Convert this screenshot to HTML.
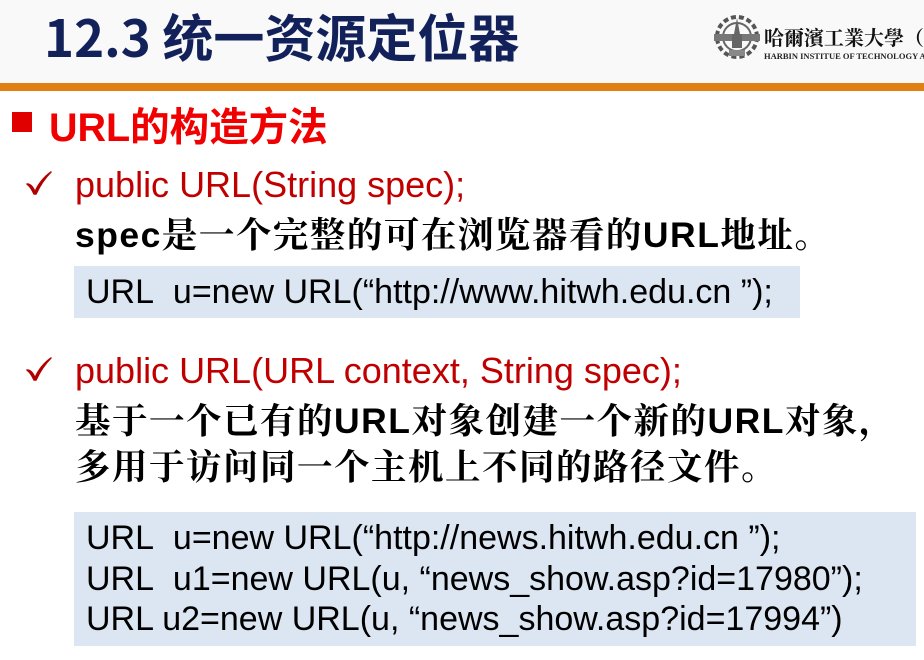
<!DOCTYPE html>
<html><head><meta charset="utf-8"><style>
body{margin:0;width:924px;height:660px;background:#fff;position:relative;overflow:hidden;font-family:"Liberation Sans","Noto Sans CJK SC",sans-serif}
.a{position:absolute;white-space:nowrap}
#hdr{left:0;top:0;width:924px;height:83px;background:#f9f9f9}
#bar{left:0;top:83px;width:924px;height:8px;background:#e08012}
#t{left:44px;top:-2px;font-size:51px;font-weight:bold;color:#12215a;font-family:"Noto Sans CJK SC",sans-serif}
.red{color:#c00000;font-size:36px}
.cj{font-family:"Liberation Sans","Noto Serif CJK SC",serif;font-weight:bold;font-size:35.5px;color:#000;letter-spacing:1.5px}
.box{background:#dce6f2}
.code{font-size:34px;color:#000}
</style></head><body>
<div class="a" id="hdr"></div>
<div class="a" id="bar"></div>
<div class="a" id="t">12.3 统一资源定位器</div>
<svg class="a" style="left:712px;top:12px" width="50" height="50" viewBox="0 0 50 50">
<circle cx="25" cy="25" r="20" fill="none" stroke="#555" stroke-width="4" stroke-dasharray="5 3"/>
<circle cx="25" cy="25" r="14" fill="none" stroke="#666" stroke-width="2"/>
<rect x="2" y="22" width="46" height="7" fill="#777"/>
<path d="M25 6 L28 22 L22 22Z M20 22h10v14H20z" fill="#666"/>
<rect x="17" y="38" width="16" height="6" fill="#888"/>
</svg>
<div class="a" style="left:764px;top:0;width:160px;height:83px;overflow:hidden">
<div class="a" style="left:0;top:22px;font-size:20px;font-weight:bold;color:#111;font-family:'Noto Serif CJK SC',serif">哈爾濱工業大學（</div>
<div class="a" style="left:0;top:51px;font-size:8.5px;color:#222;font-family:'Liberation Serif',serif;font-weight:bold">HARBIN INSTITUE OF TECHNOLOGY AT</div>
</div>
<div class="a" style="left:12px;top:112px;width:20px;height:20px;background:#e00000"></div>
<div class="a" style="left:49px;top:96px;font-size:39.5px;font-weight:bold;color:#f00000">URL的构造方法</div>
<svg class="a" style="left:26px;top:171px" width="26" height="26" viewBox="0 0 26 26"><path d="M1 13 Q6 13 9 21 Q14 9 25 1 Q16 10 10 23 L8 23 Q5 16 1 13Z" fill="#b00000" stroke="#b00000" stroke-width="1.5" stroke-linejoin="round"/></svg>
<div class="a red" style="left:75px;top:164px">public URL(String spec);</div>
<div class="a cj" style="left:75px;top:207px">spec是一个完整的可在浏览器看的URL地址。</div>
<div class="a box" style="left:74px;top:266px;width:726px;height:52px"></div>
<div class="a code" style="left:86px;top:273px">URL&nbsp; u=new URL(“http://www.hitwh.edu.cn ”);</div>
<svg class="a" style="left:26px;top:357px" width="26" height="26" viewBox="0 0 26 26"><path d="M1 13 Q6 13 9 21 Q14 9 25 1 Q16 10 10 23 L8 23 Q5 16 1 13Z" fill="#b00000" stroke="#b00000" stroke-width="1.5" stroke-linejoin="round"/></svg>
<div class="a red" style="left:75px;top:350px">public URL(URL context, String spec);</div>
<div class="a cj" style="left:75px;top:393px">基于一个已有的URL对象创建一个新的URL对象，</div>
<div class="a cj" style="left:75px;top:439px">多用于访问同一个主机上不同的路径文件。</div>
<div class="a box" style="left:74px;top:512px;width:842px;height:134px"></div>
<div class="a code" style="left:86px;top:519px">URL&nbsp; u=new URL(“http://news.hitwh.edu.cn ”);</div>
<div class="a code" style="left:86px;top:560px">URL&nbsp; u1=new URL(u, “news_show.asp?id=17980”);</div>
<div class="a code" style="left:86px;top:600px">URL u2=new URL(u, “news_show.asp?id=17994”)</div>
</body></html>
